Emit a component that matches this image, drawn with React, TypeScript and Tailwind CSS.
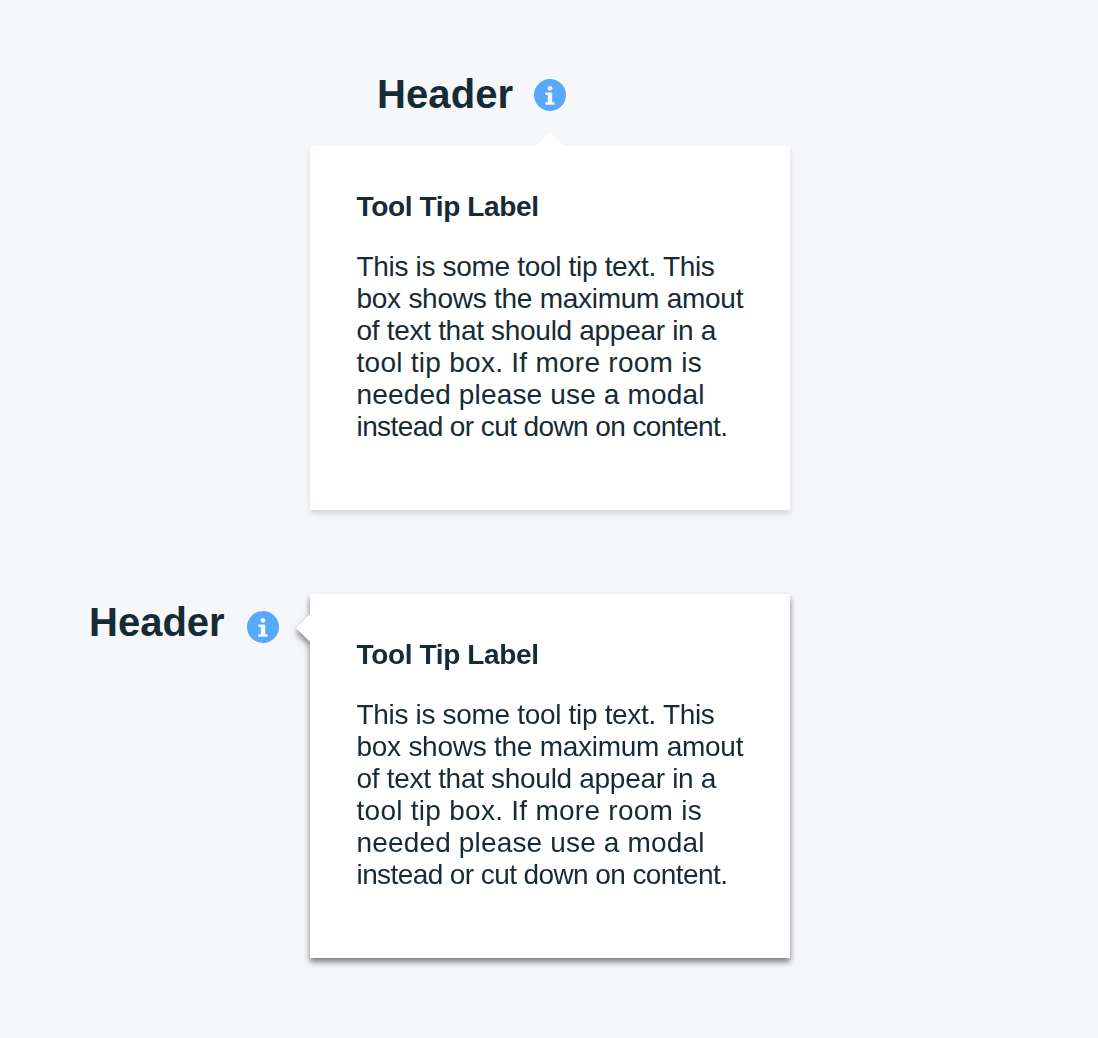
const lines = [
  { text: "This is some tool tip text. This", cls: "tracking-[-0.32px]" },
  { text: "box shows the maximum amout", cls: "tracking-[-0.26px]" },
  { text: "of text that should appear in a", cls: "tracking-[-0.3px]" },
  { text: "tool tip box. If more room is", cls: "tracking-[0.27px]" },
  { text: "needed please use a modal", cls: "tracking-[0.16px]" },
  { text: "instead or cut down on content.", cls: "tracking-[-0.59px]" },
];

function InfoIcon({ className }: { className: string }) {
  return (
    <svg viewBox="0 0 32 32" className={className}>
      <circle cx="16" cy="16" r="16" fill="#58a9fa" />
      <circle cx="16" cy="9.3" r="2.4" fill="#f5f7fb" />
      <path
        d="M11.4 13.6h6.8v9.6h2.4v2.5h-9.3v-2.5h2.5v-7.1h-2.4z"
        fill="#f5f7fb"
      />
    </svg>
  );
}

function TipContent() {
  return (
    <div className="pt-[45px] pl-[46.5px]">
      <h2 className="text-[28px] leading-8 font-bold whitespace-nowrap tracking-[-0.36px]">
        Tool Tip Label
      </h2>
      <p className="mt-7 text-[28px] leading-8 whitespace-nowrap">
        {lines.map((l) => (
          <span key={l.text} className="block">
            <span className={l.cls}>{l.text}</span>
          </span>
        ))}
      </p>
    </div>
  );
}

export default function App() {
  return (
    <main className="h-[1038px] w-[1098px] overflow-hidden bg-[#f5f7fb] font-['Liberation_Sans',Arial,sans-serif] text-[#162b35]">
      <header className="flex h-[146px] pt-[69px] pl-[377px]">
        <h1 className="w-[157px] text-[40px] leading-[50px] font-bold tracking-[0.1px]">
          Header
        </h1>
        <InfoIcon className="mt-[10px] size-8" />
      </header>
      <section className="relative ml-[310px] h-[364px] w-[480px] bg-white shadow-[0_4px_6px_rgba(0,0,0,0.13)]">
        <div className="absolute -top-[14px] left-[225px] h-[15px] w-[30px] bg-white [clip-path:polygon(50%_0,100%_100%,0_100%)]" />
        <TipContent />
      </section>
      <div className="mt-[84px] flex">
        <header className="flex w-[310px] pt-[3px] pl-[89px]">
          <h1 className="w-[158px] text-[40px] leading-[50px] font-bold tracking-[0px]">
            Header
          </h1>
          <InfoIcon className="mt-[14px] size-8" />
        </header>
        <section className="relative h-[364px] w-[480px] bg-white drop-shadow-[0_4px_3px_rgba(0,0,0,0.5)]">
          <div className="absolute top-[19px] -left-[14px] h-[30px] w-[15px] bg-white [clip-path:polygon(0_50%,100%_0,100%_100%)]" />
          <TipContent />
        </section>
      </div>
    </main>
  );
}
